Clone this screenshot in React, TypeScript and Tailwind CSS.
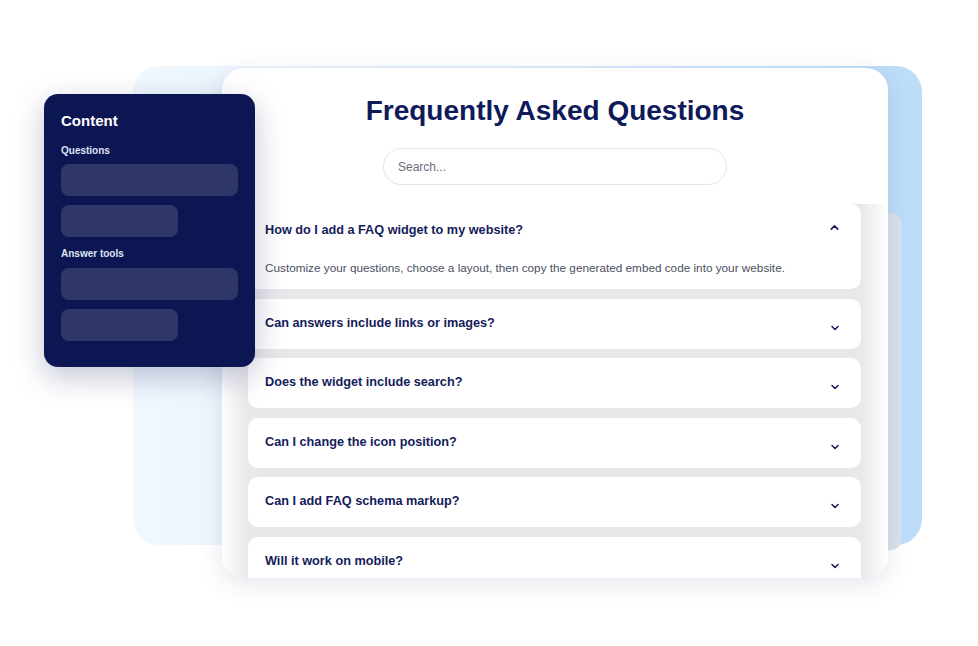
import { ChevronDown, ChevronUp } from "lucide-react";

const questions = [
  "Can answers include links or images?",
  "Does the widget include search?",
  "Can I change the icon position?",
  "Can I add FAQ schema markup?",
  "Will it work on mobile?",
];

function Sidebar() {
  return (
    <div className="absolute left-[44px] top-[94px] w-[211px] h-[273px] rounded-[14px] bg-[#0c1652] px-[17px] pt-[18px] shadow-[0_10px_30px_rgba(12,22,82,0.25)]">
      <h2 className="text-[15px] font-bold text-white leading-[18px]">Content</h2>
      <p className="mt-[15px] text-[10px] font-bold text-[#dfe3f3] leading-[12px]">Questions</p>
      <div className="mt-[7px] h-[32px] w-[177px] rounded-[8px] bg-[#2e3767]" />
      <div className="mt-[9px] h-[32px] w-[117px] rounded-[8px] bg-[#2e3767]" />
      <p className="mt-[11px] text-[10px] font-bold text-[#dfe3f3] leading-[12px]">Answer tools</p>
      <div className="mt-[8px] h-[32px] w-[177px] rounded-[8px] bg-[#2e3767]" />
      <div className="mt-[9px] h-[32px] w-[117px] rounded-[8px] bg-[#2e3767]" />
    </div>
  );
}

function FaqItem({ q }: { q: string }) {
  return (
    <div className="flex h-[50px] shrink-0 items-center justify-between rounded-[10px] bg-white pl-[17px] pr-[20px]">
      <span className="text-[12.7px] font-bold text-[#141c5a]">{q}</span>
      <ChevronDown className="mt-[8px] h-[12px] w-[12px] text-[#141c5a]" strokeWidth={3} />
    </div>
  );
}

export default function App() {
  return (
    <div className="relative h-[646px] w-[978px] overflow-hidden bg-white font-['Liberation_Sans',Arial,sans-serif]">
      {/* back panel */}
      <div className="absolute left-[133px] top-[66px] h-[479px] w-[789px] rounded-[26px] bg-[linear-gradient(to_right,#f1f8fe,#e4f1fd_40%,#bcdcf9)]" />
      {/* card behind list */}
      <div className="absolute left-[840px] top-[213px] h-[337px] w-[62px] rounded-[12px] bg-[linear-gradient(to_right,#e6eaf1,#d8e1ee)]" />

      {/* main card */}
      <div className="absolute left-[222px] top-[68px] flex h-[510px] w-[666px] flex-col overflow-hidden rounded-[22px] bg-white shadow-[0_6px_24px_rgba(30,50,90,0.12)]">
        <h1 className="mt-[27px] shrink-0 text-center text-[28px] font-bold leading-[32px] text-[#0f1a5a]">
          Frequently Asked Questions
        </h1>
        <div className="mx-auto mt-[21px] flex h-[37px] w-[344px] shrink-0 items-center rounded-full border border-[#e3e4e8] bg-white px-[14px]">
          <span className="text-[12px] text-[#6b6f7a]">Search...</span>
        </div>

        <div className="mt-[19px] flex flex-1 flex-col gap-[9.5px] bg-[linear-gradient(to_right,#ffffff,#e8e8eb_26px,#e8e8eb_calc(100%-27px),#ffffff)] pl-[26px] pr-[27px]">
          <div className="h-[85px] shrink-0 rounded-[10px] bg-white pl-[17px] pr-[20px] pt-[17px]">
            <div className="flex items-center justify-between">
              <span className="text-[12.7px] font-bold text-[#141c5a]">How do I add a FAQ widget to my website?</span>
              <ChevronUp className="-mt-[6px] h-[13px] w-[13px] text-[#141c5a]" strokeWidth={3} />
            </div>
            <p className="mt-[19px] text-[11.75px] text-[#4b5063]">
              Customize your questions, choose a layout, then copy the generated embed code into your website.
            </p>
          </div>
          {questions.map((q) => (
            <FaqItem key={q} q={q} />
          ))}
        </div>
      </div>

      <Sidebar />
    </div>
  );
}
